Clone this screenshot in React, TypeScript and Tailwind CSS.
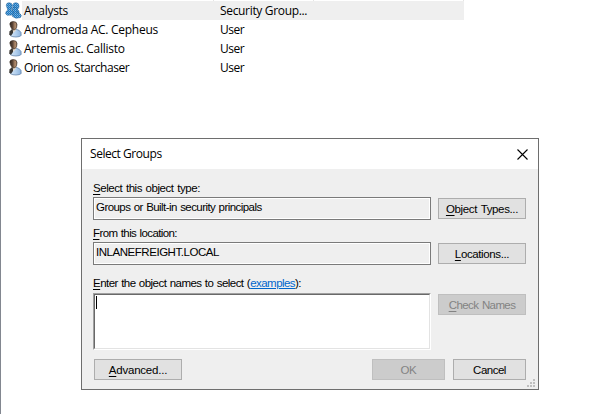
import type { ReactNode } from "react";

function UserIcon() {
  return (
    <svg width="14" height="17" viewBox="0 0 14 17" className="block">
      <defs>
        <linearGradient id="body" x1="0" x2="1" y1="0" y2="0">
          <stop offset="0" stopColor="#d3e4f5" />
          <stop offset="0.5" stopColor="#b3d0ee" />
          <stop offset="1" stopColor="#8bb2dc" />
        </linearGradient>
        <linearGradient id="face" x1="0" x2="1" y1="0" y2="0">
          <stop offset="0" stopColor="#2e241d" />
          <stop offset="0.4" stopColor="#5d4637" />
          <stop offset="0.75" stopColor="#b58f6f" />
          <stop offset="1" stopColor="#7a5c45" />
        </linearGradient>
      </defs>
      <path d="M3.500 9.500 L8 8.200 Q12 9 13 11.500 L13.200 14.500 Q11.500 16 8 16 Q4.500 16 2.500 14.800 Z" fill="url(#body)" stroke="#587aa3" strokeWidth="0.7" />
      <path d="M1.500 10.500 L4 8 L5.200 9.500 L5 12 L3 14.800 L1.200 13.800 Z" fill="#3a3835" />
      <path d="M4.300 7 L8 7 L8 9 L5.500 12 Z" fill="#e9dccd" />
      <path d="M1.800 3 Q1.800 .6 5.200 .5 Q9 .6 9 3.500 Q9 7 7.300 8.500 Q5.500 9.500 4.200 8.300 Q2.500 6.500 1.800 3 Z" fill="url(#face)" stroke="#33271f" strokeWidth="0.6" />
    </svg>
  );
}

function GroupIcon() {
  return (
    <svg width="17" height="17" viewBox="0 0 17 17" className="block">
      <defs>
        <pattern id="dither" width="2" height="2" patternUnits="userSpaceOnUse">
          <rect width="2" height="2" fill="#1a76c2" />
          <rect width="1" height="1" fill="#7fb6df" />
          <rect x="1" y="1" width="1" height="1" fill="#5a9fd2" />
        </pattern>
      </defs>
      <g fill="url(#dither)" stroke="#1d5c94" strokeWidth="0.5">
        <path d="M7.800 2.500 Q8.500 .6 11 .7 Q14 1 14 4 Q14 6 12.500 7.500 L14 9 L14 11 L8 10 Z" />
        <path d="M1.300 3.500 Q1.300 .8 4 .7 Q7.200 .8 7.200 3.500 Q7.200 6 6 7.500 L8.500 9 L9 13 L2 13.200 L.6 11.500 Q.7 9 2.800 8 Z" />
        <path d="M7.200 7.500 Q7.300 5.300 9.800 5.200 Q12.300 5.500 12.300 7.800 Q12.300 9.500 11.300 10.500 Q15.500 10.800 16.300 13.500 L15.500 15.500 L11 16.200 L7.500 14.500 L8.500 10.500 Z" />
      </g>
    </svg>
  );
}

const rows = [
  { name: "Analysts", type: "Security Group...", group: true, nameCls: "tracking-[-0.3px]", typeCls: "tracking-[-0.33px]" },
  { name: "Andromeda AC. Cepheus", type: "User", nameCls: "tracking-[-0.27px]", typeCls: "tracking-[-0.5px]" },
  { name: "Artemis ac. Callisto", type: "User", nameCls: "tracking-[-0.25px]", typeCls: "tracking-[-0.5px]" },
  { name: "Orion os. Starchaser", type: "User", nameCls: "tracking-[-0.42px]", typeCls: "tracking-[-0.5px]" },
];

function Key({ children }: { children: ReactNode }) {
  return <span className="underline decoration-1 underline-offset-2">{children}</span>;
}

function Button({ children, className, disabled }: { children: ReactNode; className: string; disabled?: boolean }) {
  return (
    <button
      disabled={disabled}
      className={`h-[21px] shrink-0 border text-center leading-[20px] whitespace-nowrap ${
        disabled ? "border-[#bfbfbf] bg-[#cccccc] text-[#838383]" : "border-[#adadad] bg-[#e1e1e1] text-black"
      } ${className}`}
    >
      {children}
    </button>
  );
}

function Field({ children, className }: { children: string; className: string }) {
  return (
    <div className="h-[23px] w-[338px] border border-[#7a7a7a] bg-[#efefef] pl-[2px] leading-[19px] whitespace-nowrap shadow-[inset_0_0_0_1px_#fff]">
      <span className={className}>{children}</span>
    </div>
  );
}

export default function App() {
  return (
    <div className="relative h-[414px] w-[601px] overflow-hidden border-l border-[#828790] bg-white text-black">
      <div className="flex flex-col font-['Open_Sans','Noto_Sans',sans-serif] text-[12px]">
        <div className="flex h-px">
          <div className="w-[213px] border-r border-[#e5e5e5]" />
          <div className="w-[100px] border-r border-[#e5e5e5]" />
          <div className="w-[150px] border-r border-[#e5e5e5]" />
        </div>
        {rows.map((r) => (
          <div key={r.name} className="flex h-[19px] w-[463px]">
            <div className={`w-[21px] shrink-0 pt-px ${r.group ? "pl-[4px]" : "pl-[7px]"}`}>{r.group ? <GroupIcon /> : <UserIcon />}</div>
            <div className={`flex flex-1 leading-[19px] whitespace-nowrap ${r.group ? "bg-[#efefef]" : ""}`}>
              <span className="w-[198px] pl-[2px]">
                <span className={r.nameCls}>{r.name}</span>
              </span>
              <span className={r.typeCls}>{r.type}</span>
            </div>
          </div>
        ))}
      </div>

      <div className="absolute top-[138px] left-[80px] flex h-[252px] w-[458px] flex-col border border-[#6e6e6e] bg-[#efefef] font-['Liberation_Sans',Arial,sans-serif] text-[11.5px]">
        <div className="flex h-[30px] items-center justify-between bg-white pr-[10px] pl-[8px] font-['Open_Sans','Noto_Sans',sans-serif] text-[12px]">
          <span className="tracking-[-0.45px]">Select Groups</span>
          <svg width="11" height="11" viewBox="0 0 11 11" stroke="#000" strokeWidth="1.1" className="block">
            <path d="M.5 .5 L10.500 10.500 M10.500 .5 L.5 10.500" />
          </svg>
        </div>
        <div className="flex flex-col pt-[11px] pl-[11px]">
          <div className="h-[17px] leading-[16px] tracking-[-0.44px] [word-spacing:0.8px] whitespace-nowrap"><Key>S</Key>elect this object type:</div>
          <div className="flex items-start gap-[7px]">
            <Field className="tracking-[-0.56px] [word-spacing:0.7px]">Groups or Built-in security principals</Field>
            <Button className="mt-px w-[88px] tracking-[-0.36px] [word-spacing:1px]"><Key>O</Key>bject Types...</Button>
          </div>
          <div className="mt-[5px] h-[17px] leading-[16px] tracking-[-0.6px] [word-spacing:0.7px] whitespace-nowrap"><Key>F</Key>rom this location:</div>
          <div className="flex items-start gap-[7px]">
            <Field className="tracking-[-0.46px]">INLANEFREIGHT.LOCAL</Field>
            <Button className="mt-px w-[88px] tracking-[-0.38px]"><Key>L</Key>ocations...</Button>
          </div>
          <div className="mt-[10px] h-[18px] leading-[17px] tracking-[-0.54px] [word-spacing:0.7px] whitespace-nowrap">
            <Key>E</Key>nter the object names to select (<span className="text-[#0066cc] underline">examples</span>):
          </div>
          <div className="flex items-start gap-[7px]">
            <div className="h-[57px] w-[338px] border border-t-[#a0a0a0] border-r-white border-b-white border-l-[#a0a0a0]">
              <div className="h-full border border-t-[#696969] border-r-[#e3e3e3] border-b-[#e3e3e3] border-l-[#696969] bg-white pt-px pl-px">
                <div className="h-[13px] w-px bg-black" />
              </div>
            </div>
            <Button disabled className="mt-px w-[88px] tracking-[-0.6px] [word-spacing:1px]"><Key>C</Key>heck Names</Button>
          </div>
          <div className="mt-[9px] ml-px flex">
            <Button className="w-[88px] tracking-[-0.22px]"><Key>A</Key>dvanced...</Button>
            <Button disabled className="ml-[190px] w-[73px] tracking-[-0.4px]">OK</Button>
            <Button className="ml-[8px] w-[73px] tracking-[-0.5px]">Cancel</Button>
          </div>
        </div>
        <svg width="8" height="8" viewBox="0 0 8 8" fill="#bfbfbf" className="absolute right-[3px] bottom-[2px]">
          <path d="M6 0h2v2h-2z M3 3h2v2h-2z M6 3h2v2h-2z M0 6h2v2h-2z M3 6h2v2h-2z M6 6h2v2h-2z" />
        </svg>
      </div>
    </div>
  );
}
